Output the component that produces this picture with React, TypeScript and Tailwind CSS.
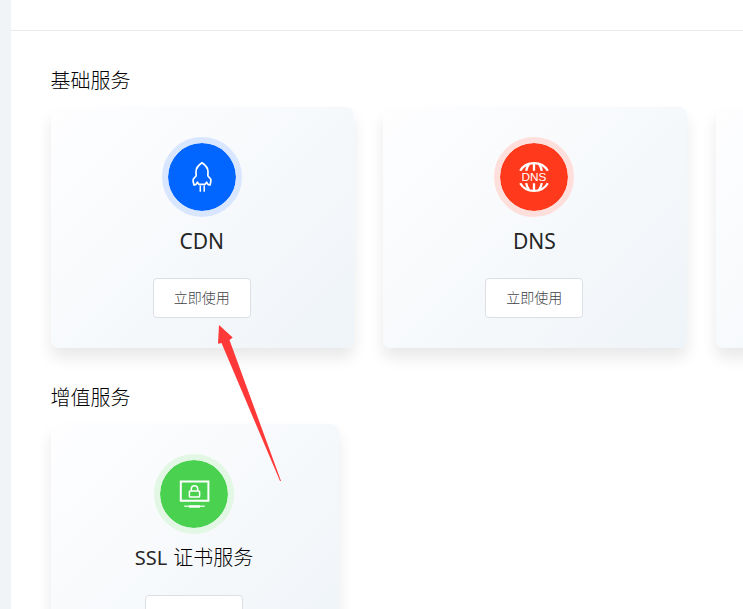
import type { ReactNode } from "react";

function RocketIcon() {
  return (
    <svg width="40" height="40" viewBox="0 0 40 40" fill="none" stroke="#fff" strokeWidth="1.7" strokeLinejoin="round" className="shrink-0">
      <path d="M20 5.8 C15.8 8.5 14 11.5 14 15 C14 17 14.4 18.2 14 19 L11.2 22.2 V24.8 L12 28 L13.8 27.6 L15.4 25.2 L16.8 27.3 H23.2 L24.6 25.2 L26.2 27.6 L28 28 L28.8 24.8 V22.2 L26 19 C25.6 18.2 26 17 26 15 C26 11.5 24.2 8.5 20 5.8 Z" />
      <path d="M18.3 28.5 V34.8 M22.2 28.5 V34.8" strokeWidth="1.5" />
    </svg>
  );
}

function DnsIcon() {
  return (
    <svg width="40" height="40" viewBox="0 0 40 40" fill="none" stroke="#fff" strokeWidth="2.3" className="shrink-0">
      <path d="M6.2 13.8 C12 3.6 28 3.6 33.8 13.8 M6.2 26.2 C12 36.4 28 36.4 33.8 26.2" />
      <path d="M20 6 V13.8 M20 26.2 V34 M15.2 6.8 Q12.8 9.8 12.2 13.8 M24.8 6.8 Q27.2 9.8 27.8 13.8 M15.2 33.2 Q12.8 30.2 12.2 26.2 M24.8 33.2 Q27.2 30.2 27.8 26.2" />
      <text x="20" y="24" textAnchor="middle" fill="#fff" stroke="none" fontSize="10.5" fontWeight="400" fontFamily="Liberation Sans, sans-serif" textLength="25" lengthAdjust="spacingAndGlyphs">DNS</text>
    </svg>
  );
}

function SslIcon() {
  return (
    <svg width="40" height="40" viewBox="0 0 40 40" fill="none" stroke="#fff" className="shrink-0">
      <path d="M6.8 7.4 H34.4 V26.8 H6.8 Z" strokeWidth="2" />
      <rect x="15.4" y="16.9" width="10.2" height="6.2" rx="0.8" strokeWidth="1.5" />
      <path d="M17.3 16.9 V14.8 Q17.3 11.7 20.5 11.7 Q23.7 11.7 23.7 14.8 V16.9" strokeWidth="1.5" />
      <path d="M10.2 32.2 H30.8" strokeWidth="1.2" />
      <path d="M15 32.5 H26" strokeWidth="2.4" />
    </svg>
  );
}

const latinTitle = "text-[21px] font-normal text-[#262626]";

function ServiceCard({ title, size, disc, action, children }: { title: ReactNode; size: string; disc: string; action: string; children: ReactNode }) {
  return (
    <article className={`flex h-[241px] shrink-0 flex-col items-center rounded-lg bg-linear-135 from-[#fefeff] to-[#eff4f8] pt-[30px] pr-px shadow-[0_10px_15px_rgba(0,0,0,0.09)] ${size}`}>
      <div className={`flex size-20 shrink-0 items-center justify-center rounded-full border-[6px] bg-clip-padding ${disc}`}>{children}</div>
      <h3 className="mt-2 h-8 text-xl leading-8 whitespace-nowrap text-black">{title}</h3>
      <button className={`mt-[21px] h-10 w-[98px] shrink-0 rounded border border-[#dcdfe6] bg-white text-sm text-[#404246] ${action}`}>立即使用</button>
    </article>
  );
}

export default function App() {
  return (
    <div className="flex h-[609px] w-[743px] overflow-hidden bg-[#f0f4f7] pl-[11px] font-['Noto_Sans','Noto_Sans_CJK_SC',sans-serif] font-light">
      <main className="min-w-0 flex-1 overflow-hidden bg-white">
        <header className="h-[31px] border-b border-[#e8eaec]" />
        <section className="pt-[34px] pl-[39.5px]">
          <h2 className="h-8 text-xl leading-8 text-black">基础服务</h2>
          <div className="mt-[10px] flex gap-[28.94px]">
            <ServiceCard title={<span className={latinTitle}>CDN</span>} size="w-[303.6px]" disc="border-[#d9e6ff] bg-[#0066ff]" action="pt-0"><RocketIcon /></ServiceCard>
            <ServiceCard title={<span className={latinTitle}>DNS</span>} size="w-[303.6px]" disc="border-[#ffdfdb] bg-[#ff391b]" action="pt-0"><DnsIcon /></ServiceCard>
            <article className="h-[241px] w-[303.6px] shrink-0 rounded-lg bg-linear-135 from-[#fefeff] to-[#eff4f8] shadow-[0_10px_15px_rgba(0,0,0,0.09)]" />
          </div>
        </section>
        <section className="pt-[34px] pl-[39.5px]">
          <h2 className="h-8 text-xl leading-8 text-black">增值服务</h2>
          <div className="mt-[10px] flex">
            <ServiceCard title={<><span className="font-normal text-[#262626]">SSL</span> <span className="ml-px">证书服务</span></>} size="w-[288px]" disc="border-[#e2f8e5] bg-[#4bd150]" action="pt-1"><SslIcon /></ServiceCard>
          </div>
        </section>
      </main>
      <svg className="absolute top-[320px] left-[210px]" width="76" height="166" viewBox="210 320 76 166">
        <path d="M219 325 L232.7 337.5 L229.5 340 L281 481 L280 481 L221.5 343 L218 343.8 Z" fill="#ff3838" />
      </svg>
    </div>
  );
}
